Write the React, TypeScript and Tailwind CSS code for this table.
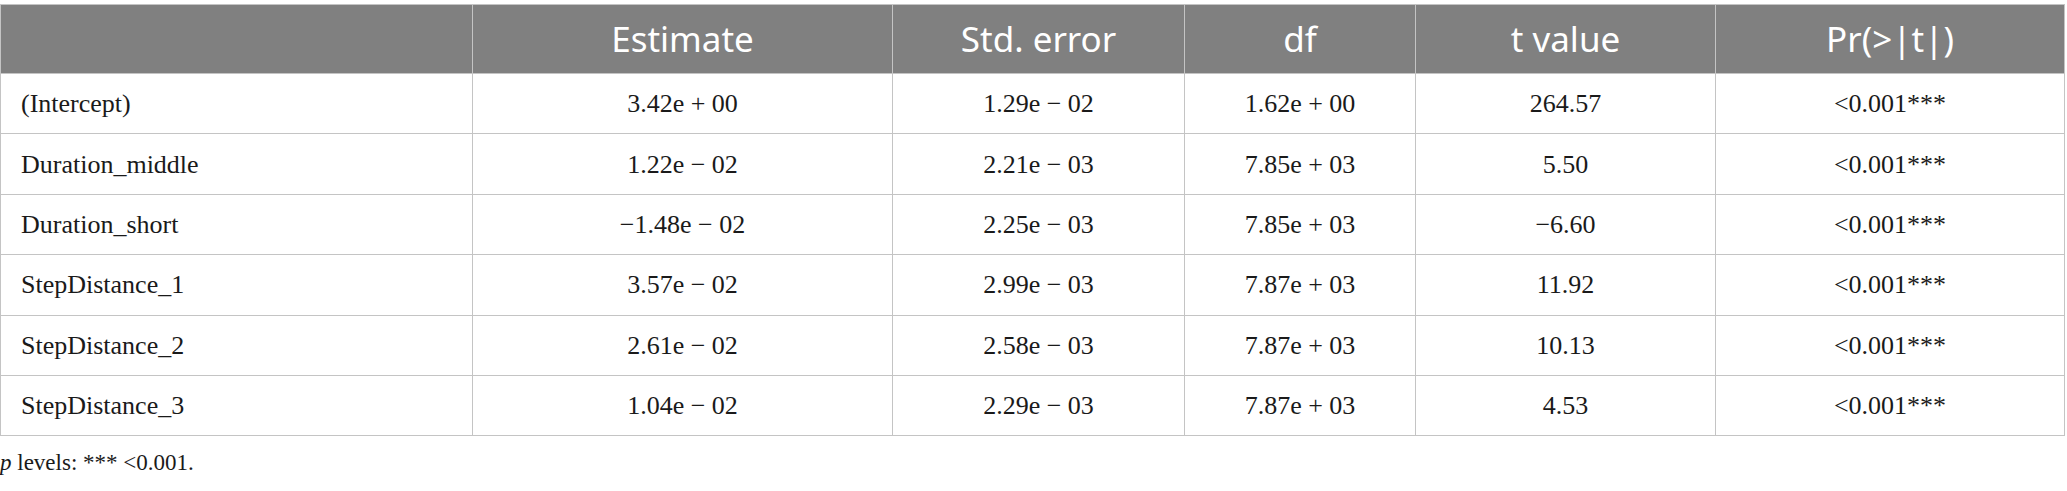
const headers = ["", "Estimate", "Std. error", "df", "t value", "Pr(>|t|)"];

const rows: Array<Array<string>> = [
  ["(Intercept)", "3.42e + 00", "1.29e − 02", "1.62e + 00", "264.57", "<0.001***"],
  ["Duration_middle", "1.22e − 02", "2.21e − 03", "7.85e + 03", "5.50", "<0.001***"],
  ["Duration_short", "−1.48e − 02", "2.25e − 03", "7.85e + 03", "−6.60", "<0.001***"],
  ["StepDistance_1", "3.57e − 02", "2.99e − 03", "7.87e + 03", "11.92", "<0.001***"],
  ["StepDistance_2", "2.61e − 02", "2.58e − 03", "7.87e + 03", "10.13", "<0.001***"],
  ["StepDistance_3", "1.04e − 02", "2.29e − 03", "7.87e + 03", "4.53", "<0.001***"],
];

const App = () => {
  return (
    <div className="w-[2067px] h-[491px] bg-white pt-[4px]">
      <div className="w-[2065px] grid grid-cols-[471px_419px_291px_230px_299px_348px] gap-px p-px bg-[#c4c4c4]">
        {headers.map((h, i) => (
          <div
            key={i}
            className="h-[68px] bg-[#808080] flex items-center justify-center text-white text-[35px] font-['Noto_Sans',sans-serif]"
          >
            {h}
          </div>
        ))}
        {rows.map((row, r) =>
          row.map((cell, c) => (
            <div
              key={`${r}-${c}`}
              className={`h-[59.4px] bg-white flex items-center text-[#1a1a1a] text-[26px] font-['Liberation_Serif',serif] ${
                c === 0 ? "justify-start pl-[20px]" : "justify-center"
              }`}
            >
              {cell}
            </div>
          ))
        )}
      </div>
      <p className="mt-[13px] text-[23px] leading-[28px] text-[#1a1a1a] font-['Liberation_Serif',serif]">
        <i>p</i> levels: *** &lt;0.001.
      </p>
    </div>
  );
};

export default App;
